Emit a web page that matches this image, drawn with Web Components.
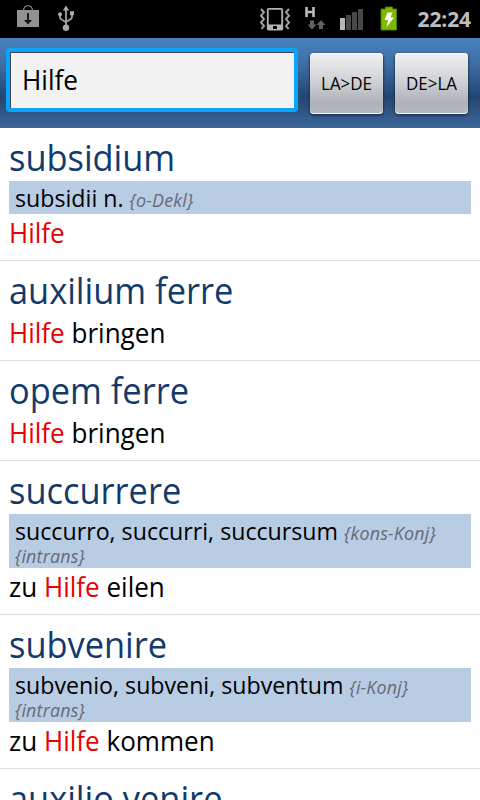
<!DOCTYPE html>
<html lang="de">
<head>
<meta charset="utf-8">
<title>Latein Wörterbuch</title>
<style>
  body {
    margin: 0;
    width: 480px;
    height: 800px;
    overflow: hidden;
    background: #fff;
    font-family: "Open Sans", "Noto Sans", sans-serif;
  }
</style>
</head>
<body>
<dict-app></dict-app>

<script>
// Status bar with notification icons on the left, system icons on the right
class StatusBar extends HTMLElement {
  constructor() {
    super();
    this.attachShadow({ mode: "open" }).innerHTML = `
      <style>
        :host {
          display: flex;
          height: 38px;
          background: #000;
        }
        svg { display: block; flex: none; }
        .time {
          flex: 1;
          text-align: right;
          padding-right: 9px;
          font-size: 21px;
          font-weight: bold;
          line-height: 39px;
          letter-spacing: -0.1px;
          color: #bebebe;
        }
      </style>
      <svg width="250" height="38" viewBox="0 0 250 38">
        <!-- market bag -->
        <path d="M23.5 11 C23.5 3.8 32.5 3.8 32.5 11" fill="none" stroke="#858585" stroke-width="1.3"/>
        <path d="M17 10h22v17H17z" fill="#929292"/>
        <path d="M28 13v8" stroke="#111" stroke-width="1.8"/>
        <path d="M24 20h8l-4 4.5z" fill="#111"/>
        <!-- usb -->
        <g fill="#aaa" stroke="none">
          <path d="M66 5.5l3.2 5h-6.4z"/>
          <circle cx="66" cy="27.8" r="3.2"/>
          <circle cx="60" cy="14.2" r="2"/>
          <path d="M70 11.2h4v4h-4z"/>
        </g>
        <path d="M66 9v18M60 14v3.2q0 1.5 1.5 2.2l4.5 3M72 14v3q0 1.5-1.5 2.2L66 22" fill="none" stroke="#aaa" stroke-width="1.7"/>
      </svg>
      <svg width="152" height="38" viewBox="250 0 152 38">
        <!-- vibrate -->
        <rect x="267.8" y="8.8" width="14.4" height="20.8" rx="1" fill="none" stroke="#b4b4b4" stroke-width="1.8"/>
        <path d="M267 24.5h16V30h-16z" fill="#b4b4b4"/>
        <path d="M273 26h4v3h-4z" fill="#000"/>
        <path d="M261 9l3 3.3-3 3.4 3 3.4-3 3.4 3 3.4-2.6 3.1M289 9l-3 3.3 3 3.4-3 3.4 3 3.4-3 3.4 2.6 3.1" fill="none" stroke="#a6a6a6" stroke-width="1.9"/>
        <!-- mobile data -->
        <path d="M306.5 7v10M313.5 7v10M306.5 12h7" fill="none" stroke="#bcbcbc" stroke-width="2.6"/>
        <path d="M310 20.5h4v4h2.5L312 29.5 307.5 24.5H310zM319 29h4v-4h2.5L321 20l-4.5 5H319z" fill="#626262"/>
        <!-- signal -->
        <path d="M340 18h5v12h-5z" fill="#b6b6b6"/>
        <path d="M346 15h5v15h-5zM352 12h5v18h-5zM358 9h5v21h-5z" fill="#484848"/>
        <!-- battery -->
        <path d="M385.5 7h7v2h4v21H381V9h4.5z" fill="#7fb800" stroke="#4c8500" stroke-width="0.8"/>
        <path d="M387.5 12.5h5l-2 5h3.5L386.5 27l1.5-7h-3.5z" fill="#fff"/>
      </svg>
      <span class="time"><slot></slot></span>
    `;
  }
}

class SearchField extends HTMLElement {
  constructor() {
    super();
    this.attachShadow({ mode: "open" }).innerHTML = `
      <style>
        :host {
          display: block;
          box-sizing: border-box;
          width: 292px;
          height: 64px;
          border: 4px solid #0aa4fc;
          border-radius: 4px;
          background: #f2f2f2;
          box-shadow: inset 1px 1px 0 #41474e;
          padding-left: 12px;
          font-size: 28px;
          line-height: 55px;
          color: #000;
        }
        div {
          transform: scaleX(0.935);
          transform-origin: 0 0;
        }
      </style>
      <div><slot></slot></div>
    `;
  }
}

class LangButton extends HTMLElement {
  constructor() {
    super();
    this.attachShadow({ mode: "open" }).innerHTML = `
      <style>
        :host {
          display: block;
          box-sizing: border-box;
          width: 73px;
          height: 61px;
          border-radius: 4px;
          background: linear-gradient(#f0f1f2, #d0d2d6 45%, #aeb2b9 82%, #b6bac0);
          box-shadow: inset 0 -1px 0 #f4f4f4, inset 0 1px 0 #fff, 0 1px 2px 1px rgba(20, 35, 60, 0.6);
          text-align: center;
          font-size: 18px;
          line-height: 61px;
          color: #000;
        }
        div { transform: scaleX(0.94); }
      </style>
      <div><slot></slot></div>
    `;
  }
}

// One hit: headword, optional grammar line, translation
class DictEntry extends HTMLElement {
  constructor() {
    super();
    this.attachShadow({ mode: "open" }).innerHTML = `
      <style>
        :host {
          display: block;
          padding: 9px;
          border-bottom: 1px solid #dcdcdc;
        }
        .word, .meaning, .grammar div {
          transform-origin: 0 0;
          white-space: nowrap;
        }
        .word {
          height: 44px;
          font-size: 36px;
          line-height: 42px;
          transform: scaleX(0.955);
          color: #123a6b;
        }
        .grammar {
          box-sizing: border-box;
          min-height: 33px;
          padding: 5px 6px 3px;
          background: #b8cce4;
        }
        .grammar div {
          font-size: 24px;
          line-height: 23px;
          transform: scaleX(0.966);
          color: #000;
        }
        .grammar[hidden] { display: none; }
        ::slotted(i) {
          font-size: 18.5px;
          line-height: 0;
          letter-spacing: 0.2px;
          color: #646b75;
        }
        .meaning {
          height: 37px;
          font-size: 28px;
          line-height: 37px;
          transform: scaleX(0.93);
          color: #000;
        }
        ::slotted(b) {
          font-weight: normal;
          color: #e90000;
        }
      </style>
      <div class="word"><slot name="word"></slot></div>
      <div class="grammar"><div><slot name="forms"></slot> <slot name="tag"></slot></div></div>
      <div class="meaning"><slot></slot></div>
    `;
  }

  connectedCallback() {
    const grammar = this.shadowRoot.querySelector(".grammar");
    grammar.hidden = !this.querySelector("[slot=forms]");
  }
}

class DictApp extends HTMLElement {
  constructor() {
    super();
    this.attachShadow({ mode: "open" }).innerHTML = `
      <style>
        :host {
          display: block;
          height: 800px;
          overflow: hidden;
        }
        header {
          display: flex;
          align-items: flex-start;
          box-sizing: border-box;
          height: 90px;
          padding: 10px 0 0 6px;
          background: linear-gradient(#4b82c0, #3d6da4 30%, #24456f 66%, #2d5280 78%, #3c6799);
        }
        lang-button { margin: 5px 0 0 12px; }
      </style>
      <status-bar>22:24</status-bar>
      <header>
        <search-field>Hilfe</search-field>
        <lang-button>LA&gt;DE</lang-button>
        <lang-button>DE&gt;LA</lang-button>
      </header>
      <main>
        <dict-entry>
          <span slot="word">subsidium</span>
          <span slot="forms">subsidii n.</span><i slot="tag">{o-Dekl}</i><b>Hilfe</b>
        </dict-entry>
        <dict-entry><span slot="word">auxilium ferre</span><b>Hilfe</b> bringen</dict-entry>
        <dict-entry><span slot="word">opem ferre</span><b>Hilfe</b> bringen</dict-entry>
        <dict-entry>
          <span slot="word">succurrere</span>
          <span slot="forms">succurro, succurri, succursum</span><i slot="tag">{kons-Konj}<br>{intrans}</i>zu <b>Hilfe</b> eilen
        </dict-entry>
        <dict-entry>
          <span slot="word">subvenire</span>
          <span slot="forms">subvenio, subveni, subventum</span><i slot="tag">{i-Konj}<br>{intrans}</i>zu <b>Hilfe</b> kommen
        </dict-entry>
        <dict-entry><span slot="word">auxilio venire</span><b>Hilfe</b> bringen</dict-entry>
      </main>
    `;
  }
}

customElements.define("status-bar", StatusBar);
customElements.define("search-field", SearchField);
customElements.define("lang-button", LangButton);
customElements.define("dict-entry", DictEntry);
customElements.define("dict-app", DictApp);
</script>
</body>
</html>
